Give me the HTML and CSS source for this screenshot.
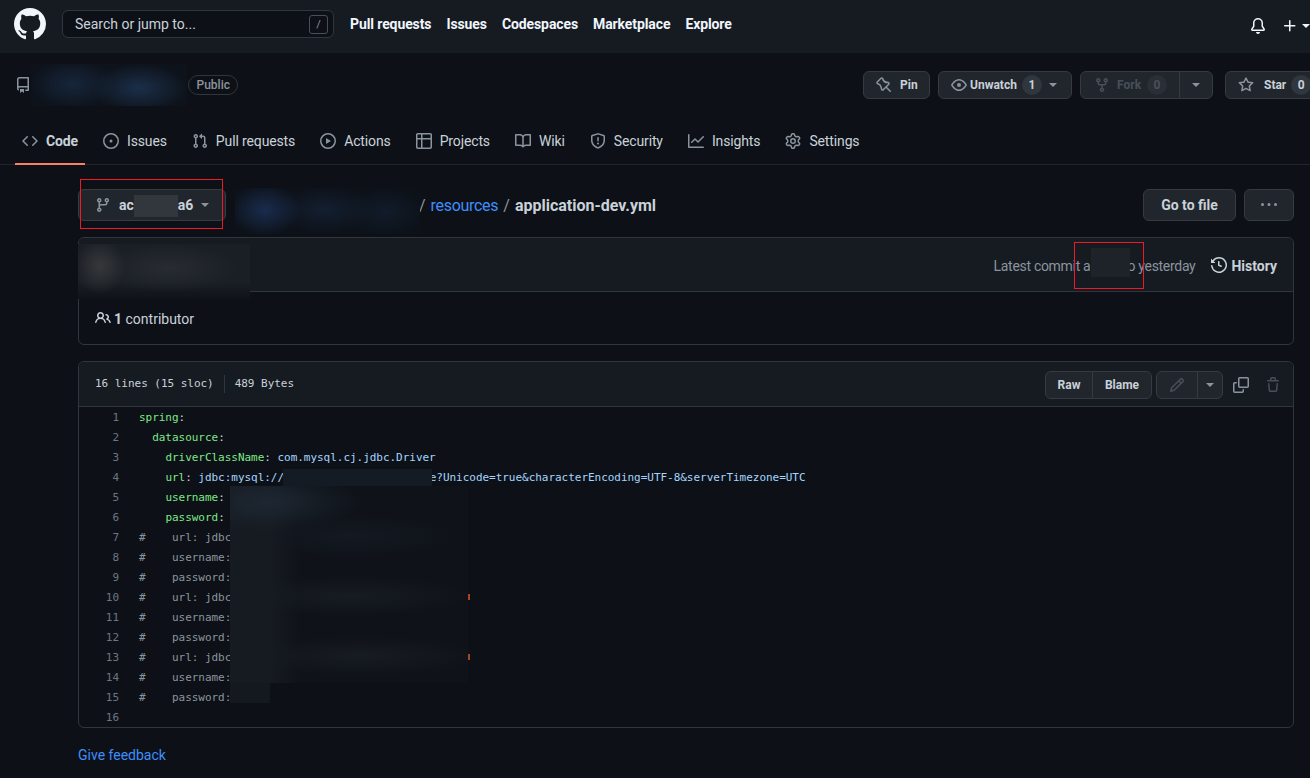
FILE: index.html
```html
<!DOCTYPE html>
<html lang="en">
<head>
<meta charset="utf-8">
<title>application-dev.yml</title>
<link rel="stylesheet" href="styles.css">
</head>
<body>
<svg class="sprite" aria-hidden="true">
<symbol id="i-mark" viewBox="0 0 16 16"><path d="M8 0C3.58 0 0 3.58 0 8c0 3.54 2.29 6.53 5.47 7.59.4.07.55-.17.55-.38 0-.19-.01-.82-.01-1.49-2.01.37-2.53-.49-2.69-.94-.09-.23-.48-.94-.82-1.13-.28-.15-.68-.52-.01-.53.63-.01 1.08.58 1.23.82.72 1.21 1.87.87 2.33.66.07-.52.28-.87.51-1.07-1.78-.2-3.64-.89-3.64-3.95 0-.87.31-1.59.82-2.15-.08-.2-.36-1.02.08-2.12 0 0 .67-.21 2.2.82.64-.18 1.32-.27 2-.27.68 0 1.36.09 2 .27 1.53-1.04 2.2-.82 2.2-.82.44 1.1.16 1.92.08 2.12.51.56.82 1.27.82 2.15 0 3.07-1.87 3.75-3.65 3.95.29.25.54.73.54 1.48 0 1.07-.01 1.93-.01 2.2 0 .21.15.46.55.38A8.013 8.013 0 0016 8c0-4.42-3.58-8-8-8z"/></symbol>
<symbol id="i-repo" viewBox="0 0 16 16"><path d="M2 2.5A2.5 2.5 0 014.5 0h8.75a.75.75 0 01.75.75v12.5a.75.75 0 01-.75.75h-2.5a.75.75 0 110-1.5h1.75v-2h-8a1 1 0 00-.714 1.7.75.75 0 01-1.072 1.05A2.495 2.495 0 012 11.5v-9zm10.5-1V9h-8c-.356 0-.694.074-1 .208V2.5a1 1 0 011-1h8zM5 12.25v3.25a.25.25 0 00.4.2l1.45-1.087a.25.25 0 01.3 0L8.6 15.7a.25.25 0 00.4-.2v-3.25a.25.25 0 00-.25-.25h-3.5a.25.25 0 00-.25.25z"/></symbol>
<symbol id="i-code" viewBox="0 0 16 16"><path d="M4.72 3.22a.75.75 0 011.06 1.06L2.06 8l3.72 3.72a.75.75 0 11-1.06 1.06L.47 8.53a.75.75 0 010-1.06l4.25-4.25zm6.56 0a.75.75 0 10-1.06 1.06L13.94 8l-3.72 3.72a.75.75 0 101.06 1.06l4.25-4.25a.75.75 0 000-1.06l-4.25-4.25z"/></symbol>
<symbol id="i-issue" viewBox="0 0 16 16"><path d="M8 9.5a1.5 1.5 0 100-3 1.5 1.5 0 000 3z"/><path d="M8 0a8 8 0 100 16A8 8 0 008 0zM1.5 8a6.5 6.5 0 1113 0 6.5 6.5 0 01-13 0z"/></symbol>
<symbol id="i-pr" viewBox="0 0 16 16"><path d="M7.177 3.073L9.573.677A.25.25 0 0110 .854v4.792a.25.25 0 01-.427.177L7.177 3.427a.25.25 0 010-.354zM3.75 2.5a.75.75 0 100 1.5.75.75 0 000-1.5zm-2.25.75a2.25 2.25 0 113 2.122v5.256a2.251 2.251 0 11-1.5 0V5.372A2.25 2.25 0 011.5 3.25zM11 2.5h-1V4h1a1 1 0 011 1v5.628a2.251 2.251 0 101.5 0V5A2.5 2.5 0 0011 2.5zm1 10.25a.75.75 0 111.5 0 .75.75 0 01-1.5 0zM3.75 12a.75.75 0 100 1.5.75.75 0 000-1.5z"/></symbol>
<symbol id="i-play" viewBox="0 0 16 16"><path d="M1.5 8a6.5 6.5 0 1113 0 6.5 6.5 0 01-13 0zM8 0a8 8 0 100 16A8 8 0 008 0zM6.379 5.227A.25.25 0 006 5.442v5.117a.25.25 0 00.379.214l4.264-2.559a.25.25 0 000-.428L6.379 5.227z"/></symbol>
<symbol id="i-table" viewBox="0 0 16 16"><path d="M0 1.75C0 .784.784 0 1.75 0h12.5C15.216 0 16 .784 16 1.75v12.5A1.75 1.75 0 0114.25 16H1.75A1.75 1.75 0 010 14.25V1.75zM1.5 6.5v7.75c0 .138.112.25.25.25H5v-8H1.5zM5 5H1.5V1.75a.25.25 0 01.25-.25H5V5zm1.5 1.5v8h7.75a.25.25 0 00.25-.25V6.5h-8zm8-1.5h-8V1.5h7.75a.25.25 0 01.25.25V5z"/></symbol>
<symbol id="i-book" viewBox="0 0 16 16"><path d="M0 1.75A.75.75 0 01.75 1h4.253c1.227 0 2.317.59 3 1.501A3.744 3.744 0 0111.006 1h4.245a.75.75 0 01.75.75v10.5a.75.75 0 01-.75.75h-4.507a2.25 2.25 0 00-1.591.659l-.622.621a.75.75 0 01-1.06 0l-.622-.621A2.25 2.25 0 005.258 13H.75a.75.75 0 01-.75-.75V1.75zm8.755 3a2.25 2.25 0 012.25-2.25H14.5v9h-3.757c-.71 0-1.4.201-1.992.572l.004-7.322zm-1.504 7.324l.004-5.073-.002-2.253A2.25 2.25 0 005.003 2.5H1.5v9h3.757a3.75 3.75 0 011.994.574z"/></symbol>
<symbol id="i-shield" viewBox="0 0 16 16"><path d="M7.467.133a1.75 1.75 0 011.066 0l5.25 1.68A1.75 1.75 0 0115 3.48V7c0 1.566-.32 3.182-1.303 4.682-.983 1.498-2.585 2.813-5.032 3.855a1.7 1.7 0 01-1.33 0c-2.447-1.042-4.049-2.357-5.032-3.855C1.32 10.182 1 8.566 1 7V3.48a1.75 1.75 0 011.217-1.667l5.25-1.68zm.61 1.429a.25.25 0 00-.153 0l-5.25 1.68a.25.25 0 00-.174.238V7c0 1.358.275 2.666 1.057 3.86.784 1.194 2.121 2.34 4.366 3.297a.2.2 0 00.154 0c2.245-.956 3.582-2.104 4.366-3.298C13.225 9.666 13.5 8.36 13.5 7V3.48a.25.25 0 00-.174-.237l-5.25-1.68zM9 10.5a1 1 0 11-2 0 1 1 0 012 0zm-.25-5.75a.75.75 0 10-1.5 0v3a.75.75 0 001.5 0v-3z"/></symbol>
<symbol id="i-graph" viewBox="0 0 16 16"><path d="M1.5 1.75a.75.75 0 00-1.5 0v12.5c0 .414.336.75.75.75h14.5a.75.75 0 000-1.5H1.5V1.75zm14.28 2.53a.75.75 0 00-1.06-1.06L10 7.94 7.53 5.47a.75.75 0 00-1.06 0L3.22 8.72a.75.75 0 001.06 1.06L7 7.06l2.47 2.47a.75.75 0 001.06 0l5.25-5.25z"/></symbol>
<symbol id="i-gear" viewBox="0 0 16 16"><path d="M7.429 1.525a6.593 6.593 0 011.142 0c.036.003.108.036.137.146l.289 1.105c.147.56.55.967.997 1.189.174.086.341.183.501.29.417.278.97.423 1.53.27l1.102-.303c.11-.03.175.016.195.046.219.31.41.641.573.989.014.031.022.11-.059.19l-.815.806c-.411.406-.562.957-.53 1.456a4.588 4.588 0 010 .582c-.032.499.119 1.05.53 1.456l.815.806c.08.08.073.159.059.19a6.494 6.494 0 01-.573.99c-.02.029-.086.074-.195.045l-1.103-.303c-.559-.153-1.112-.008-1.529.27-.16.107-.327.204-.5.29-.449.222-.851.628-.998 1.189l-.289 1.105c-.029.11-.101.143-.137.146a6.613 6.613 0 01-1.142 0c-.036-.003-.108-.037-.137-.146l-.289-1.105c-.147-.56-.55-.967-.997-1.189a4.502 4.502 0 01-.501-.29c-.417-.278-.97-.423-1.53-.27l-1.102.303c-.11.03-.175-.016-.195-.046a6.492 6.492 0 01-.573-.989c-.014-.031-.022-.11.059-.19l.815-.806c.411-.406.562-.957.53-1.456a4.587 4.587 0 010-.582c.032-.499-.119-1.05-.53-1.456l-.815-.806c-.08-.08-.073-.159-.059-.19a6.44 6.44 0 01.573-.99c.02-.029.086-.075.195-.045l1.103.303c.559.153 1.112.008 1.529-.27.16-.107.327-.204.5-.29.449-.222.851-.628.998-1.189l.289-1.105c.029-.11.101-.143.137-.146zM8 0c-.236 0-.47.01-.701.03-.743.065-1.29.615-1.458 1.261l-.29 1.106c-.017.066-.078.158-.211.224a5.994 5.994 0 00-.668.386c-.123.082-.233.09-.3.071L3.27 2.776c-.644-.177-1.392.02-1.82.63a7.977 7.977 0 00-.704 1.217c-.315.675-.111 1.422.363 1.891l.815.806c.05.048.098.147.088.294a6.084 6.084 0 000 .772c.01.147-.038.246-.088.294l-.815.806c-.474.469-.678 1.216-.363 1.891.2.428.436.835.704 1.218.428.609 1.176.806 1.82.63l1.103-.303c.066-.019.176-.011.299.071.213.143.436.272.668.386.133.066.194.158.212.224l.289 1.106c.169.646.715 1.196 1.458 1.26a8.094 8.094 0 001.402 0c.743-.064 1.29-.614 1.458-1.26l.29-1.106c.017-.066.078-.158.211-.224a5.98 5.98 0 00.668-.386c.123-.082.233-.09.3-.071l1.102.302c.644.177 1.392-.02 1.82-.63.268-.382.505-.789.704-1.217.315-.675.111-1.422-.364-1.891l-.814-.806c-.05-.048-.098-.147-.088-.294a6.1 6.1 0 000-.772c-.01-.147.039-.246.088-.294l.814-.806c.475-.469.679-1.216.364-1.891a7.992 7.992 0 00-.704-1.218c-.428-.609-1.176-.806-1.82-.63l-1.103.303c-.066.019-.176.011-.299-.071a5.991 5.991 0 00-.668-.386c-.133-.066-.194-.158-.212-.224L10.16 1.29C9.99.645 9.444.095 8.701.031A8.094 8.094 0 008 0zm1.5 8a1.5 1.5 0 11-3 0 1.5 1.5 0 013 0zM11 8a3 3 0 11-6 0 3 3 0 016 0z"/></symbol>
<symbol id="i-bell" viewBox="0 0 16 16"><path d="M8 16a2 2 0 001.985-1.75c.017-.137-.097-.25-.235-.25h-3.5c-.138 0-.252.113-.235.25A2 2 0 008 16z"/><path d="M8 1.5A3.5 3.5 0 004.5 5v2.947c0 .346-.102.683-.294.97l-1.703 2.556a.018.018 0 00-.003.01l.001.006c0 .002.002.004.004.006a.017.017 0 00.006.004l.007.001h10.964l.007-.001a.016.016 0 00.006-.004.016.016 0 00.004-.006l.001-.007a.017.017 0 00-.003-.01l-1.703-2.554a1.75 1.75 0 01-.294-.97V5A3.5 3.5 0 008 1.5zM3 5a5 5 0 0110 0v2.947c0 .05.015.098.042.139l1.703 2.555A1.518 1.518 0 0113.482 13H2.518a1.518 1.518 0 01-1.263-2.36l1.703-2.554A.25.25 0 003 7.947V5z"/></symbol>
<symbol id="i-plus" viewBox="0 0 16 16"><path d="M7.75 2a.75.75 0 01.75.75V7h4.25a.75.75 0 110 1.5H8.5v4.25a.75.75 0 11-1.5 0V8.5H2.75a.75.75 0 010-1.5H7V2.75A.75.75 0 017.75 2z"/></symbol>
<symbol id="i-pin" viewBox="0 0 16 16"><path d="M4.456.734a1.75 1.75 0 012.826.504l.613 1.327a3.081 3.081 0 002.084 1.707l2.454.584c1.332.317 1.8 1.972.832 2.94L11.06 10l3.72 3.72a.75.75 0 11-1.061 1.06L10 11.06l-2.204 2.205c-.968.968-2.623.5-2.94-.832l-.584-2.454a3.081 3.081 0 00-1.707-2.084l-1.327-.613a1.75 1.75 0 01-.504-2.826L4.456.734zM5.92 1.866a.25.25 0 00-.404-.072L1.794 5.516a.25.25 0 00.072.404l1.328.613A4.582 4.582 0 015.73 9.63l.584 2.454a.25.25 0 00.42.12l5.47-5.47a.25.25 0 00-.12-.42L9.63 6.13a4.581 4.581 0 01-3.098-2.537L5.92 1.866z"/></symbol>
<symbol id="i-eye" viewBox="0 0 16 16"><path d="M1.679 7.932c.412-.621 1.242-1.75 2.366-2.717C5.175 4.242 6.527 3.5 8 3.5c1.473 0 2.824.742 3.955 1.715 1.124.967 1.954 2.096 2.366 2.717a.119.119 0 010 .136c-.412.621-1.242 1.75-2.366 2.717C10.825 11.758 9.473 12.5 8 12.5c-1.473 0-2.824-.742-3.955-1.715C2.92 9.818 2.09 8.69 1.679 8.068a.119.119 0 010-.136zM8 2c-1.981 0-3.67.992-4.933 2.078C1.797 5.169.88 6.423.43 7.1a1.619 1.619 0 000 1.798c.45.678 1.367 1.932 2.637 3.024C4.329 13.008 6.019 14 8 14c1.981 0 3.67-.992 4.933-2.078 1.27-1.091 2.187-2.345 2.637-3.023a1.619 1.619 0 000-1.798c-.45-.678-1.367-1.932-2.637-3.023C11.671 2.992 9.981 2 8 2zm0 8a2 2 0 100-4 2 2 0 000 4z"/></symbol>
<symbol id="i-fork" viewBox="0 0 16 16"><path d="M5 3.25a.75.75 0 11-1.5 0 .75.75 0 011.5 0zm0 2.122a2.25 2.25 0 10-1.5 0v.878A2.25 2.25 0 005.75 8.5h1.5v2.128a2.251 2.251 0 101.5 0V8.5h1.5a2.25 2.25 0 002.25-2.25v-.878a2.25 2.25 0 10-1.5 0v.878a.75.75 0 01-.75.75h-4.5A.75.75 0 015 6.25v-.878zm3.75 7.378a.75.75 0 11-1.5 0 .75.75 0 011.5 0zm3-8.75a.75.75 0 100-1.5.75.75 0 000 1.5z"/></symbol>
<symbol id="i-star" viewBox="0 0 16 16"><path d="M8 .25a.75.75 0 01.673.418l1.882 3.815 4.21.612a.75.75 0 01.416 1.279l-3.046 2.97.719 4.192a.75.75 0 01-1.088.791L8 12.347l-3.766 1.98a.75.75 0 01-1.088-.79l.72-4.194L.818 6.374a.75.75 0 01.416-1.28l4.21-.611L7.327.668A.75.75 0 018 .25zm0 2.445L6.615 5.5a.75.75 0 01-.564.41l-3.097.45 2.24 2.184a.75.75 0 01.216.664l-.528 3.084 2.769-1.456a.75.75 0 01.698 0l2.77 1.456-.53-3.084a.75.75 0 01.216-.664l2.24-2.183-3.096-.45a.75.75 0 01-.564-.41L8 2.694v.001z"/></symbol>
<symbol id="i-branch" viewBox="0 0 16 16"><path d="M11.75 2.5a.75.75 0 100 1.5.75.75 0 000-1.5zm-2.25.75a2.25 2.25 0 113 2.122V6A2.5 2.5 0 0110 8.5H6a1 1 0 00-1 1v1.128a2.251 2.251 0 11-1.5 0V5.372a2.25 2.25 0 111.5 0v1.836A2.492 2.492 0 016 7h4a1 1 0 001-1v-.628A2.25 2.25 0 019.5 3.25zM4.25 12a.75.75 0 100 1.5.75.75 0 000-1.5zM3.5 3.25a.75.75 0 111.5 0 .75.75 0 01-1.5 0z"/></symbol>
<symbol id="i-kebab" viewBox="0 0 16 16"><path d="M8 9a1.5 1.5 0 100-3 1.5 1.5 0 000 3zM1.5 9a1.5 1.5 0 100-3 1.5 1.5 0 000 3zm13 0a1.5 1.5 0 100-3 1.5 1.5 0 000 3z"/></symbol>
<symbol id="i-history" viewBox="0 0 16 16"><path d="M1.643 3.143L.427 1.927A.25.25 0 000 2.104V5.75c0 .138.112.25.25.25h3.646a.25.25 0 00.177-.427L2.715 4.215a6.5 6.5 0 11-1.18 4.458.75.75 0 10-1.493.154 8.001 8.001 0 101.6-5.684zM7.75 4a.75.75 0 01.75.75v2.992l2.028.812a.75.75 0 01-.557 1.392l-2.5-1A.75.75 0 017 8.25v-3.5A.75.75 0 017.75 4z"/></symbol>
<symbol id="i-people" viewBox="0 0 16 16"><path d="M5.5 3.5a2 2 0 100 4 2 2 0 000-4zM2 5.5a3.5 3.5 0 115.898 2.549 5.507 5.507 0 013.034 4.084.75.75 0 11-1.482.235 4.001 4.001 0 00-7.9 0 .75.75 0 01-1.482-.236A5.507 5.507 0 013.102 8.05 3.49 3.49 0 012 5.5zM11 4a.75.75 0 100 1.5 1.5 1.5 0 01.666 2.844.75.75 0 00-.416.672v.352a.75.75 0 00.574.73c1.2.289 2.162 1.2 2.522 2.372a.75.75 0 101.434-.44 5.01 5.01 0 00-2.56-3.012A3 3 0 0011 4z"/></symbol>
<symbol id="i-pencil" viewBox="0 0 16 16"><path d="M11.013 1.427a1.75 1.75 0 012.474 0l1.086 1.086a1.75 1.75 0 010 2.474l-8.61 8.61c-.21.21-.47.364-.756.445l-3.251.93a.75.75 0 01-.927-.928l.929-3.25a1.75 1.75 0 01.445-.758l8.61-8.61zm1.414 1.06a.25.25 0 00-.354 0L10.811 3.75l1.439 1.44 1.263-1.263a.25.25 0 000-.354l-1.086-1.086zM11.189 6.25L9.75 4.81l-6.286 6.287a.25.25 0 00-.064.108l-.558 1.953 1.953-.558a.249.249 0 00.108-.064l6.286-6.286z"/></symbol>
<symbol id="i-copy" viewBox="0 0 16 16"><path d="M0 6.75C0 5.784.784 5 1.75 5h1.5a.75.75 0 010 1.5h-1.5a.25.25 0 00-.25.25v7.5c0 .138.112.25.25.25h7.5a.25.25 0 00.25-.25v-1.5a.75.75 0 011.5 0v1.5A1.75 1.75 0 019.25 16h-7.5A1.75 1.75 0 010 14.25v-7.5z"/><path d="M5 1.75C5 .784 5.784 0 6.75 0h7.5C15.216 0 16 .784 16 1.75v7.5A1.75 1.75 0 0114.25 11h-7.5A1.75 1.75 0 015 9.25v-7.5zm1.75-.25a.25.25 0 00-.25.25v7.5c0 .138.112.25.25.25h7.5a.25.25 0 00.25-.25v-7.5a.25.25 0 00-.25-.25h-7.5z"/></symbol>
<symbol id="i-trash" viewBox="0 0 16 16"><path d="M6.5 1.75a.25.25 0 01.25-.25h2.5a.25.25 0 01.25.25V3h-3V1.75zm4.5 0V3h2.25a.75.75 0 010 1.5H2.75a.75.75 0 010-1.5H5V1.75C5 .784 5.784 0 6.75 0h2.5C10.216 0 11 .784 11 1.75zM4.496 6.675a.75.75 0 10-1.492.15l.66 6.6A1.75 1.75 0 005.405 15h5.19c.9 0 1.652-.681 1.741-1.576l.66-6.6a.75.75 0 00-1.492-.149l-.66 6.6a.25.25 0 01-.249.225h-5.19a.25.25 0 01-.249-.225l-.66-6.6z"/></symbol>
</svg>

<div class="page">
  <header class="topbar">
    <svg class="logo"><use href="#i-mark"/></svg>
    <div class="search"><span>Search or jump to...</span><kbd class="slash">/</kbd></div>
    <nav class="topnav">
      <a>Pull requests</a><a>Issues</a><a>Codespaces</a><a>Marketplace</a><a>Explore</a>
    </nav>
    <div class="topright">
      <svg class="icon white"><use href="#i-bell"/></svg>
      <span class="plus"><svg class="icon white"><use href="#i-plus"/></svg><i class="caret light"></i></span>
    </div>
  </header>

  <section class="repohead">
    <div class="reporow">
      <div class="repotitle">
        <svg class="icon dim"><use href="#i-repo"/></svg>
        <span class="reponame"></span>
        <span class="label">Public</span>
      </div>
      <div class="actions">
        <a class="btn pin"><svg class="icon dim"><use href="#i-pin"/></svg><span>Pin</span></a>
        <a class="btn watch"><svg class="icon dim"><use href="#i-eye"/></svg><span>Unwatch</span><b class="count">1</b><i class="caret"></i></a>
        <div class="btngroup fork">
          <a class="btn off forkmain"><svg class="icon"><use href="#i-fork"/></svg><span>Fork</span><b class="count">0</b></a>
          <a class="btn off forkcaret"><i class="caret"></i></a>
        </div>
        <a class="btn star"><svg class="icon dim"><use href="#i-star"/></svg><span>Star</span><b class="count">0</b></a>
      </div>
    </div>
    <nav class="tabs">
      <a class="tab active"><svg class="icon dim"><use href="#i-code"/></svg>Code</a>
      <a class="tab"><svg class="icon dim"><use href="#i-issue"/></svg>Issues</a>
      <a class="tab"><svg class="icon dim"><use href="#i-pr"/></svg>Pull requests</a>
      <a class="tab"><svg class="icon dim"><use href="#i-play"/></svg>Actions</a>
      <a class="tab"><svg class="icon dim"><use href="#i-table"/></svg>Projects</a>
      <a class="tab"><svg class="icon dim"><use href="#i-book"/></svg>Wiki</a>
      <a class="tab"><svg class="icon dim"><use href="#i-shield"/></svg>Security</a>
      <a class="tab"><svg class="icon dim"><use href="#i-graph"/></svg>Insights</a>
      <a class="tab"><svg class="icon dim"><use href="#i-gear"/></svg>Settings</a>
    </nav>
  </section>

  <main class="content">
    <div class="filenav">
      <a class="btn branch"><svg class="icon dim"><use href="#i-branch"/></svg><span class="branchname">ac<span class="gap-branch"></span>a6</span><i class="caret"></i></a>
      <div class="crumbs">
        <span class="crumbgap"></span><span class="sep">/</span><a class="link">resources</a><span class="sep">/</span><strong>application-dev.yml</strong>
      </div>
      <a class="btn tall gotofile">Go to file</a>
      <a class="btn tall kebab"><svg class="icon dim"><use href="#i-kebab"/></svg></a>
    </div>

    <section class="card commit">
      <div class="commithead">
        <span class="commitmeta">Latest commit a<span class="gap-commit"></span>o yesterday</span>
        <a class="history"><svg class="icon"><use href="#i-history"/></svg><span>History</span></a>
      </div>
      <div class="contrib"><svg class="icon"><use href="#i-people"/></svg><span><b>1</b> contributor</span></div>
    </section>

    <section class="card blob">
      <div class="blobhead">
        <div class="blobinfo"><span>16 lines (15 sloc)</span><span class="infosep"></span><span>489 Bytes</span></div>
        <div class="blobtools">
          <div class="btngroup">
            <a class="btn small raw">Raw</a><a class="btn small blame">Blame</a>
          </div>
          <div class="btngroup">
            <a class="btn small off pencil"><svg class="icon"><use href="#i-pencil"/></svg></a><a class="btn small editcaret"><i class="caret"></i></a>
          </div>
          <svg class="icon dim copy"><use href="#i-copy"/></svg>
          <svg class="icon trash"><use href="#i-trash"/></svg>
        </div>
      </div>
      <div class="code">
        <div class="ln"><i>1</i><code><span class="k">spring</span>:</code></div>
        <div class="ln"><i>2</i><code>  <span class="k">datasource</span>:</code></div>
        <div class="ln"><i>3</i><code>    <span class="k">driverClassName</span>: <span class="v">com.mysql.cj.jdbc.Driver</span></code></div>
        <div class="ln"><i>4</i><code>    <span class="k">url</span>: <span class="v">jdbc:mysql://<span class="gap-url"></span>e?Unicode=true&amp;characterEncoding=UTF-8&amp;serverTimezone=UTC</span></code></div>
        <div class="ln"><i>5</i><code>    <span class="k">username</span>:</code></div>
        <div class="ln"><i>6</i><code>    <span class="k">password</span>:</code></div>
        <div class="ln"><i>7</i><code class="c">#    url: jdbc</code></div>
        <div class="ln"><i>8</i><code class="c">#    username:</code></div>
        <div class="ln"><i>9</i><code class="c">#    password:</code></div>
        <div class="ln"><i>10</i><code class="c">#    url: jdbc</code></div>
        <div class="ln"><i>11</i><code class="c">#    username:</code></div>
        <div class="ln"><i>12</i><code class="c">#    password:</code></div>
        <div class="ln"><i>13</i><code class="c">#    url: jdbc</code></div>
        <div class="ln"><i>14</i><code class="c">#    username:</code></div>
        <div class="ln"><i>15</i><code class="c">#    password:</code></div>
        <div class="ln"><i>16</i><code></code></div>
      </div>
    </section>

    <a class="link feedback">Give feedback</a>
  </main>

  <div class="mask m-repo"></div>
  <div class="mask m-path"></div>
  <div class="mask m-author"></div>
  <div class="mask m-branch"></div>
  <div class="mask m-sha"></div>
  <div class="mask m-url"></div>
  <div class="mask m-creds"></div>
  <div class="mask m-creds2"></div>
  <div class="tick t-a"></div>
  <div class="tick t-b"></div>
  <div class="mark mark-branch"></div>
  <div class="mark mark-sha"></div>
</div>
</body>
</html>
```
FILE: styles.css
```css
* { box-sizing: border-box; }
html, body { margin: 0; padding: 0; background: #0d1117; }
body { font-family: Roboto, "Noto Sans", sans-serif; font-size: 14px; line-height: 20px; color: #c9d1d9; }
.sprite { position: absolute; width: 0; height: 0; overflow: hidden; }
.page { position: relative; width: 1310px; height: 778px; overflow: hidden; }

.icon { width: 16px; height: 16px; flex: none; fill: currentColor; fill-rule: evenodd; display: block; }
.icon.dim { color: #8b949e; }
.icon.white { color: #f0f6fc; }
.caret { display: inline-block; flex: none; width: 0; height: 0; border: 4px solid transparent; border-top-color: #8b949e; border-bottom-width: 0; }
.caret.light { border-top-color: #f0f6fc; }

/* top bar */
.topbar { height: 53px; background: #161b22; display: flex; align-items: center; padding-left: 14px; }
.logo { width: 32px; height: 32px; fill: #f0f6fc; fill-rule: evenodd; flex: none; margin-top: -5px; }
.search { width: 272px; height: 28px; margin-left: 16px; border: 1px solid #30363d; border-radius: 6px; background: #0d1117; color: #c9d1d9; display: flex; align-items: center; justify-content: space-between; padding: 0 5px 0 12px; margin-top: -5px; }
.slash { width: 19px; height: 19px; border: 1px solid #484f58; border-radius: 3px; font: 11px/17px Roboto, sans-serif; text-align: center; color: #8b949e; }
.topnav { display: flex; margin-left: 16px; margin-top: -5px; font-weight: 700; letter-spacing: -0.1px; color: #f0f6fc; white-space: nowrap; }
.topnav a { margin-right: 15px; }
.topright { margin-left: auto; display: flex; align-items: center; gap: 16px; margin-top: -1px; margin-right: 0; }
.plus { display: flex; align-items: center; gap: 4px; width: 28px; }

/* repo header */
.repohead { height: 112px; border-bottom: 1px solid #21262d; padding-top: 18px; }
.reporow { display: grid; grid-template-columns: 848px auto; padding-left: 15px; height: 28px; }
.repotitle { display: flex; align-items: center; }
.reponame { width: 157px; flex: none; }
.label { border: 1px solid #30363d; border-radius: 2em; font-size: 12px; font-weight: 500; line-height: 18px; padding: 0 7.5px; color: #8b949e; }
.actions { display: flex; gap: 8px; }
.btn { display: flex; align-items: center; height: 28px; flex: none; border: 1px solid #363b42; border-radius: 6px; background: #21262d; color: #c9d1d9; font-size: 12px; font-weight: 700; white-space: nowrap; }
.btn.off { color: #484f58; }
.count { display: block; min-width: 20px; height: 20px; border-radius: 2em; background: #30363d; font-size: 12px; line-height: 20px; text-align: center; font-weight: 700; }
.pin { width: 67px; padding-left: 12px; gap: 8px; }
.watch { width: 134px; padding-left: 12px; }
.watch span { margin-left: 3px; }
.watch .count { margin-left: 5px; }
.watch .caret { margin-left: 7px; }
.btngroup { display: flex; flex: none; }
.btngroup .btn:first-child { border-radius: 6px 0 0 6px; }
.btngroup .btn:last-child { border-radius: 0 6px 6px 0; margin-left: -1px; }
.forkmain { width: 100px; padding-left: 13px; }
.forkmain span { margin-left: 7px; }
.forkmain .count { margin-left: 6px; background: #2a2f36; }
.forkcaret { width: 34px; justify-content: center; }
.star { width: 134px; margin-left: 4px; padding-left: 12px; }
.star span { margin-left: 10px; }
.star .count { margin-left: 5px; }

.tabs { display: flex; gap: 11px; padding: 1px 0 0 15px; margin-top: 18px; height: 47px; }
.tab { display: flex; align-items: center; gap: 8px; height: 47px; padding: 0 7px; color: #c9d1d9; border-bottom: 2px solid transparent; margin-bottom: -1px; letter-spacing: -0.13px; }
.tab.active { font-weight: 700; border-bottom-color: #f78166; }

/* content */
.content { padding: 24px 16px 0 78px; }
.filenav { display: flex; align-items: center; height: 32px; }
.btn.tall { height: 32px; justify-content: center; font-size: 14px; }
.branch { width: 148px; height: 32px; padding-left: 16px; font-size: 14px; }
.branchname { margin-left: 8px; }
.gap-branch { display: inline-block; width: 44px; }
.branch .caret { margin-left: 8px; }
.crumbs { flex: 1; display: flex; align-items: center; font-size: 16px; white-space: nowrap; padding-top: 2px; }
.crumbgap { width: 188px; }
.sep { color: #8b949e; margin: 0 5px; }
.crumbs strong { color: #c9d1d9; font-weight: 700; }
.crumbs .link { letter-spacing: -0.3px; }
.link { color: #3f8efc; }
.gotofile { width: 93px; }
.kebab { width: 50px; margin-left: 8px; }

.card { border: 1px solid #30363d; border-radius: 6px; }
.commit { margin-top: 16px; height: 108px; }
.commithead { height: 54px; background: #161b22; border-bottom: 1px solid #30363d; border-radius: 6px 6px 0 0; display: flex; align-items: center; justify-content: flex-end; padding-right: 16px; }
.commitmeta { color: #8b949e; white-space: nowrap; letter-spacing: -0.3px; padding-top: 2px; margin-right: 1px; }
.gap-commit { display: inline-block; width: 37px; }
.history { display: flex; align-items: center; gap: 4px; margin-left: 15px; font-weight: 700; }
.history span { padding-top: 2px; }
.contrib { display: flex; align-items: center; height: 52px; padding-left: 16px; white-space: pre; }
.contrib span { padding-top: 2px; }
.contrib b { margin-left: 3px; }

.blob { margin-top: 16px; height: 367px; }
.blobhead { height: 45px; background: #161b22; border-bottom: 1px solid #30363d; border-radius: 6px 6px 0 0; display: flex; align-items: center; justify-content: space-between; padding: 0 12px 0 16px; }
.blobinfo { display: flex; align-items: center; font: 11px/20px "DejaVu Sans Mono", "Liberation Mono", monospace; color: #c9d1d9; letter-spacing: -0.03px; }
.infosep { width: 1px; height: 18px; background: #30363d; margin: 0 10px; }
.blobtools { display: flex; align-items: center; margin-top: 1px; }
.btn.small { height: 28px; justify-content: center; }
.raw { width: 48px; }
.blame { width: 60px; }
.pencil { width: 42px; }
.editcaret { width: 26px; }
.blobtools .btngroup + .btngroup { margin-left: 4px; }
.copy { margin-left: 10px; }
.trash { margin-left: 16px; color: #484f58; }

.code { padding: 0; font: 11px/20px "DejaVu Sans Mono", "Liberation Mono", monospace; letter-spacing: -0.03px; }
.ln { display: flex; height: 20px; padding-top: 1px; }
.ln i { font-style: normal; width: 40px; text-align: right; color: #6e7681; flex: none; }
.ln code { font: inherit; white-space: pre; margin-left: 20px; color: #c9d1d9; }
.ln code.c { color: #8b949e; }
.k { color: #7ee787; }
.v { color: #a5d6ff; }
.gap-url { display: inline-block; width: 22ch; }
.feedback { display: block; margin-top: 17px; }

/* redactions laid over the page */
.mask { position: absolute; }
.m-repo { left: 31px; top: 64px; width: 156px; height: 42px; background: radial-gradient(ellipse 42px 24px at 42px 20px, #16263c, transparent), radial-gradient(ellipse 48px 24px at 108px 24px, #1b2f4a, transparent), #0e131b; }
.m-path { left: 235px; top: 188px; width: 185px; height: 46px; background: radial-gradient(ellipse 36px 26px at 30px 22px, #192c4e, transparent), radial-gradient(ellipse 50px 24px at 90px 22px, #131e30, transparent), radial-gradient(ellipse 40px 24px at 150px 24px, #111b2a, transparent), #0d1219; }
.m-author { left: 78px; top: 244px; width: 172px; height: 55px; background: radial-gradient(ellipse 26px 28px at 22px 22px, #36383b, transparent), radial-gradient(ellipse 70px 24px at 90px 24px, #282c32, transparent), linear-gradient(#1a1e25 70%, #0f1319); }
.m-branch { left: 134px; top: 195px; width: 44px; height: 22px; background: #32363d; }
.m-sha { left: 1091px; top: 248px; width: 39px; height: 29px; background: #1e2229; }
.m-url { left: 283px; top: 469px; width: 149px; height: 17px; background: #151b24; }
.m-creds { left: 230px; top: 486px; width: 238px; height: 197px; background: radial-gradient(ellipse 90px 30px at 40px 16px, #1d2732, transparent), radial-gradient(ellipse 100px 20px at 120px 50px, #141922, transparent), radial-gradient(ellipse 120px 20px at 120px 110px, #171b22, transparent), radial-gradient(ellipse 120px 20px at 130px 170px, #171b22, transparent), linear-gradient(90deg, #161a21 40px, #0f1319 70px); }
.m-creds2 { left: 230px; top: 683px; width: 40px; height: 20px; background: #14181f; }
.tick { position: absolute; left: 468px; width: 2px; height: 6px; background: #a3471d; }
.t-a { top: 594px; }
.t-b { top: 654px; }
.mark { position: absolute; border: 1px solid #ed1c24; }
.mark-branch { left: 80px; top: 179px; width: 143px; height: 50px; }
.mark-sha { left: 1074px; top: 242px; width: 70px; height: 47px; }
```
